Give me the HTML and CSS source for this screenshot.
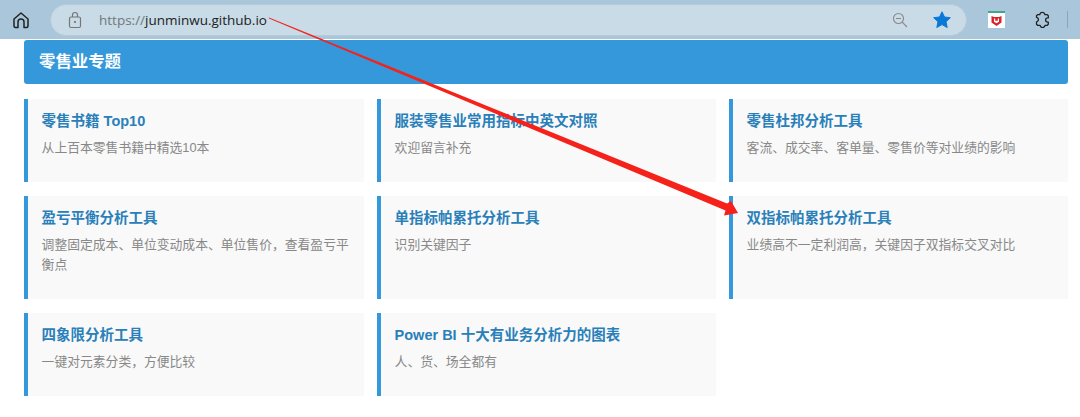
FILE: index.html
```html
<!DOCTYPE html>
<html lang="zh-CN">

<head>
    <meta charset="UTF-8">
    <title>零售业专题</title>
    <link rel="stylesheet" href="styles.css">
</head>

<body>

    <div class="browser-bar">
        <svg class="home-icon" width="18" height="18" viewBox="0 0 18 18">
            <path d="M2 8 9 2l7 6v7a1.500 1.500 0 0 1-1.500 1.500H12V11a3 3 0 0 0-6 0v5.500H3.500A1.500 1.500 0 0 1 2 15Z" fill="none" stroke="#222" stroke-width="1.500" stroke-linejoin="round"/>
        </svg>
        <div class="address">
            <svg class="lock-icon" width="14" height="18" viewBox="0 0 14 18">
                <rect x="1.500" y="6" width="11" height="10.500" rx="1.500" fill="none" stroke="#777" stroke-width="1.200"/>
                <path d="M4.500 6V4a2.500 2.500 0 0 1 5 0v2" fill="none" stroke="#777" stroke-width="1.200"/>
                <circle cx="7" cy="11" r="1" fill="#666"/>
            </svg>
            <span class="url"><span class="url-scheme">https://</span>junminwu.github.io</span>
            <svg class="zoom-icon" width="16" height="16" viewBox="0 0 16 16">
                <circle cx="6.500" cy="6.500" r="5" fill="none" stroke="#888" stroke-width="1.100"/>
                <path d="M4 6.500h5M10.200 10.200 15 15" fill="none" stroke="#888" stroke-width="1.100"/>
            </svg>
            <svg class="star-icon" width="18" height="18" viewBox="0 0 18 18">
                <path d="M9 .8 11.500 6l5.800.7-4.300 4 1.200 5.800L9 13.600l-5.200 2.900L5 10.700l-4.300-4L6.500 6Z" fill="#0a78d7" stroke="#0a78d7" stroke-linejoin="round"/>
            </svg>
        </div>
        <svg class="ext-icon" width="17" height="17" viewBox="0 0 17 17">
            <rect width="17" height="17" fill="#fff"/>
            <rect width="17" height="2" fill="#3fa88c"/>
            <path d="M3.500 5 6 6h5l2.500-1v6.500L8.500 15l-5-3.500Z" fill="#d8232a"/>
            <path d="M6 7.500h1.200v2.300h2.600V7.500H11v3.200l-2.500 1.600L6 10.700Z" fill="#fff"/>
        </svg>
        <svg class="puzzle-icon" width="17" height="17" viewBox="0 0 17 17">
            <path d="M5.800 3.200a2.600 2.600 0 0 1 5 0l.1.500h2.400l1 1v2.200h-.6a2.100 2.100 0 0 0 0 4.200h.6v2.200l-1 1h-2.200l-.3.700a2.400 2.400 0 0 1-4.500 0l-.3-.7H3.500l-1-1v-2.400l.7-.3a2.200 2.200 0 0 0 0-4l-.7-.3V4.700l1-1h2.200Z" fill="none" stroke="#222" stroke-width="1.300" stroke-linejoin="round"/>
        </svg>
        <div class="bar-divider"></div>
    </div>

    <div class="content">
        <div class="section-head">零售业专题</div>

        <div class="card-grid">
            <div class="card">
                <h3>零售书籍 Top10</h3>
                <p>从上百本零售书籍中精选10本</p>
            </div>
            <div class="card">
                <h3>服装零售业常用指标中英文对照</h3>
                <p>欢迎留言补充</p>
            </div>
            <div class="card">
                <h3>零售杜邦分析工具</h3>
                <p>客流、成交率、客单量、零售价等对业绩的影响</p>
            </div>
            <div class="card">
                <h3>盈亏平衡分析工具</h3>
                <p>调整固定成本、单位变动成本、单位售价，查看盈亏平衡点</p>
            </div>
            <div class="card">
                <h3>单指标帕累托分析工具</h3>
                <p>识别关键因子</p>
            </div>
            <div class="card">
                <h3>双指标帕累托分析工具</h3>
                <p>业绩高不一定利润高，关键因子双指标交叉对比</p>
            </div>
            <div class="card">
                <h3>四象限分析工具</h3>
                <p>一键对元素分类，方便比较</p>
            </div>
            <div class="card">
                <h3>Power BI 十大有业务分析力的图表</h3>
                <p>人、货、场全都有</p>
            </div>
        </div>
    </div>

    <!-- red annotation arrow drawn over the page -->
    <svg class="arrow" width="1080" height="417" viewBox="0 0 1080 417">
        <path d="M269 17.500 727 203.500 731 201 738 213 724 215.500 725.500 210.500 269 18.500Z" fill="#f5221b"/>
    </svg>

</body>

</html>
```

FILE: styles.css
```css
* {
    box-sizing: border-box;
}

body {
    margin: 0;
    padding: 0;
    height: 417px;
    overflow: hidden;
    background-color: white;
    font-family: "Liberation Sans", "Noto Sans CJK SC", sans-serif;
}

.browser-bar {
    height: 39px;
    display: flex;
    align-items: center;
    background-color: #a9c6da;
    padding: 0 0 0 12px;
}

.home-icon {
    flex-shrink: 0;
}

.address {
    width: 917px;
    height: 32px;
    margin-left: 20px;
    padding: 0 15px 0 17px;
    display: flex;
    align-items: center;
    background-color: #c8dbe7;
    border: 1px solid #b6cbd9;
    border-radius: 16px;
}

.lock-icon {
    flex-shrink: 0;
}

.url {
    margin-left: 17px;
    font-family: "Open Sans", sans-serif;
    font-size: 13.500px;
    color: #222;
}

.url-scheme {
    color: #6f777c;
}

.zoom-icon {
    margin-left: auto;
}

.star-icon {
    margin-left: 25px;
}

.ext-icon {
    margin-left: 21px;
    flex-shrink: 0;
}

.puzzle-icon {
    margin-left: 29px;
    flex-shrink: 0;
}

.bar-divider {
    width: 1px;
    height: 17px;
    margin-left: 16px;
    background-color: #8ea5b3;
}

.content {
    padding: 1px 12px 0 24px;
}

.section-head {
    height: 44px;
    display: flex;
    align-items: center;
    padding: 0 0 4px 15px;
    background-color: #3498db;
    border-radius: 3px;
    color: white;
    font-size: 16.400px;
    font-weight: bold;
}

.card-grid {
    margin-top: 15px;
    display: grid;
    grid-template-columns: 340px 339px 339px;
    grid-template-rows: 83px 103px 83px;
    column-gap: 13px;
    row-gap: 14px;
}

.card {
    padding: 13px 14px 0 13.600px;
    background-color: #f9f9f9;
    border-left: 4px solid #3498db;
}

.card h3 {
    margin: 0 0 8px;
    font-size: 14.500px;
    line-height: 18px;
    font-weight: bold;
    color: #2980b9;
}

.card p {
    margin: 0;
    font-size: 12.800px;
    line-height: 20px;
    color: #888;
}

.arrow {
    position: absolute;
    top: 0;
    left: 0;
}
```
